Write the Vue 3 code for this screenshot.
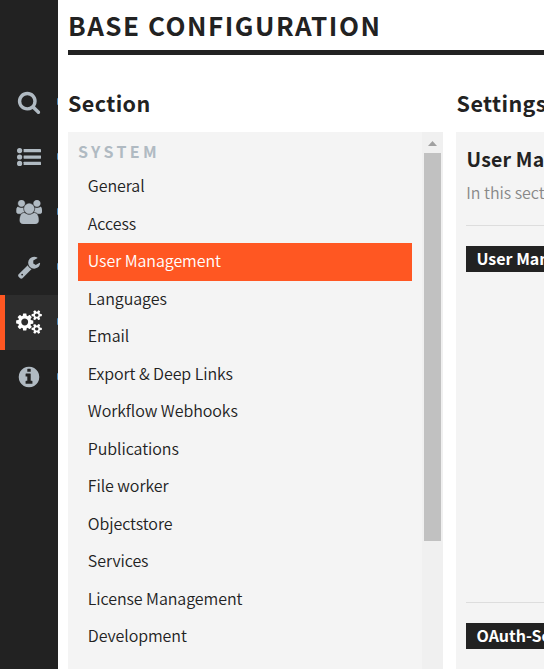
<script setup>
const nav = ['search', 'list', 'users', 'wrench', 'cogs', 'info']
const active = 'cogs'
const items = ['General', 'Access', 'User Management', 'Languages', 'Email', 'Export & Deep Links', 'Workflow Webhooks', 'Publications', 'File worker', 'Objectstore', 'Services', 'License Management', 'Development']
const selected = 'User Management'
const paths = {
  search: 'M1216 832q0-185-131.5-316.5t-316.5-131.5-316.5 131.5-131.5 316.5 131.5 316.5 316.5 131.5 316.5-131.5 131.5-316.5zm512 832q0 52-38 90t-90 38q-54 0-90-38l-343-342q-179 124-399 124-143 0-273.5-55.5t-225-150-150-225-55.5-273.5 55.5-273.5 150-225 225-150 273.5-55.5 273.5 55.5 225 150 150 225 55.5 273.5q0 220-124 399l343 343q37 37 37 90z',
  users: 'M593 896q-162 5-265 128h-134q-82 0-138-40.5t-56-118.5q0-353 124-353 6 0 43.5 21t97.5 42.5 119 21.5q67 0 133-23-5 37-5 66 0 139 81 256zm1071 637q0 120-73 189.5t-194 69.500h-874q-121 0-194-69.500t-73-189.500q0-53 3.500-103.500t14-109 26.500-108.500 43-97.500 62-81 85.500-53.500 111.500-20q10 0 43 21.500t73 48 107 48 135 21.500 135-21.500 107-48 73-48 43-21.500q61 0 111.500 20t85.500 53.500 62 81 43 97.500 26.500 108.500 14 109 3.500 103.500zm-1024-1277q0 106-75 181t-181 75-181-75-75-181 75-181 181-75 181 75 75 181zm704 384q0 159-112.500 271.500t-271.500 112.500-271.500-112.500-112.500-271.500 112.500-271.500 271.500-112.500 271.500 112.500 112.500 271.500zm576 225q0 78-56 118.500t-138 40.500h-134q-103-123-265-128 81-117 81-256 0-29-5-66 66 23 133 23 59 0 119-21.500t97.500-42.500 43.500-21q124 0 124 353zm-128-609q0 106-75 181t-181 75-181-75-75-181 75-181 181-75 181 75 75 181z',
  wrench: 'M448 1472q0-26-19-45t-45-19-45 19-19 45 19 45 45 19 45-19 19-45zm644-420l-682 682q-37 37-90 37-52 0-91-37l-106-108q-38-36-38-90 0-53 38-91l681-681q39 98 114.5 173.5t173.5 114.5zm634-435q0 39-23 106-47 134-164.5 217.5t-258.5 83.5q-185 0-316.5-131.5t-131.5-316.5 131.5-316.5 316.5-131.5q58 0 121.5 16.5t107.5 46.5q16 11 16 28t-16 28l-293 169v224l193 107q5-3 79-48.5t135.5-81 70.5-35.5q15 0 23.5 10t8.5 25z',
  info: 'M1152 1376v-160q0-14-9-23t-23-9h-96v-512q0-14-9-23t-23-9h-320q-14 0-23 9t-9 23v160q0 14 9 23t23 9h96v320h-96q-14 0-23 9t-9 23v160q0 14 9 23t23 9h448q14 0 23-9t9-23zm-128-896v-160q0-14-9-23t-23-9h-192q-14 0-23 9t-9 23v160q0 14 9 23t23 9h192q14 0 23-9t9-23zm640 416q0 209-103 385.5t-279.5 279.5-385.5 103-385.5-103-279.5-279.5-103-385.5 103-385.5 279.5-279.5 385.5-103 385.5 103 279.5 279.5 103 385.5z',
  cogs: 'M832 896q0-106-75-181t-181-75-181 75-75 181 75 181 181 75 181-75 75-181zm768 512q0-52-38-90t-90-38-90 38-38 90q0 53 37.5 90.5t90.5 37.5 90.5-37.5 37.5-90.5zm0-1024q0-52-38-90t-90-38-90 38-38 90q0 53 37.5 90.5t90.5 37.5 90.5-37.5 37.5-90.5zm-384 421v185q0 10-7 19.5t-16 10.5l-155 24q-11 35-32 76 34 48 90 115 7 11 7 20 0 12-7 19-23 30-82.5 89.5t-78.5 59.5q-11 0-21-7l-115-90q-37 19-77 31-11 108-23 155-7 24-30 24h-186q-11 0-20-7.5t-10-17.5l-23-153q-34-10-75-31l-118 89q-7 7-20 7-11 0-21-8-144-133-144-160 0-9 7-19 10-14 41-53t47-61q-23-44-35-82l-152-24q-10-1-17-9.5t-7-19.5v-185q0-10 7-19.5t16-10.5l155-24q11-35 32-76-34-48-90-115-7-11-7-20 0-12 7-20 22-30 82-89t79-59q11 0 21 7l115 90q34-18 77-32 11-108 23-154 7-24 30-24h186q11 0 20 7.5t10 17.5l23 153q34 10 75 31l118-89q8-7 20-7 11 0 21 8 144 133 144 160 0 8-7 19-12 16-42 54t-45 60q23 48 34 82l152 23q10 2 17 10.5t7 19.5zm640 533v140q0 16-149 31-12 27-30 52 51 113 51 138 0 4-4 7-122 71-124 71-8 0-46-47t-52-68q-20 2-30 2t-30-2q-14 21-52 68t-46 47q-2 0-124-71-4-3-4-7 0-25 51-138-18-25-30-52-149-15-149-31v-140q0-16 149-31 13-29 30-52-51-113-51-138 0-4 4-7 4-2 35-20t59-34 30-16q8 0 46 46.5t52 67.5q20-2 30-2t30 2q51-71 92-112l6-2q4 0 124 70 4 3 4 7 0 25-51 138 17 23 30 52 149 15 149 31zm0-1024v140q0 16-149 31-12 27-30 52 51 113 51 138 0 4-4 7-122 71-124 71-8 0-46-47t-52-68q-20 2-30 2t-30-2q-14 21-52 68t-46 47q-2 0-124-71-4-3-4-7 0-25 51-138-18-25-30-52-149-15-149-31v-140q0-16 149-31 13-29 30-52-51-113-51-138 0-4 4-7 4-2 35-20t59-34 30-16q8 0 46 46.5t52 67.5q20-2 30-2t30 2q51-71 92-112l6-2q4 0 124 70 4 3 4 7 0 25-51 138 17 23 30 52 149 15 149 31z',
}
const boxes = {
  search: '-64 0 1920 1792',
  users: '-16 0 1920 1792',
  wrench: '-64 0 1920 1792',
  info: '-64 0 1920 1792',
  cogs: '-64 0 1920 1792',
}
</script>

<template>
  <div class="app">
    <nav class="rail">
      <a v-for="n in nav" :key="n" class="rail-item" :class="{ active: n === active }">
        <svg v-if="n === 'list'" class="icon" viewBox="0 0 26 24">
          <circle cx="3.6" cy="5.6" r="2.6" /><circle cx="3.6" cy="12" r="2.6" /><circle cx="3.6" cy="18.4" r="2.6" />
          <rect x="7.6" y="4" width="17.4" height="3.3" rx=".4" />
          <rect x="7.6" y="10.4" width="17.4" height="3.3" rx=".4" />
          <rect x="7.6" y="16.8" width="17.4" height="3.3" rx=".4" />
        </svg>
        <svg v-else class="icon" :class="n" :viewBox="boxes[n]"><path :d="paths[n]" /></svg>
        <span class="bump"></span>
      </a>
    </nav>
    <main class="main">
      <h1 class="title">BASE CONFIGURATION</h1>
      <div class="columns">
        <section class="section-col">
          <h2 class="heading">Section</h2>
          <div class="list-box">
            <div class="list">
              <div class="group">SYSTEM</div>
              <div v-for="i in items" :key="i" class="item" :class="{ selected: i === selected }">{{ i }}</div>
            </div>
            <div class="scrollbar">
              <svg class="arrow" viewBox="0 0 9 5"><path d="M0 5 4.500 0 9 5z" /></svg>
              <div class="thumb"></div>
            </div>
          </div>
        </section>
        <section class="settings-col">
          <h2 class="heading">Settings</h2>
          <div class="panel">
            <h3 class="panel-title">User Management</h3>
            <p class="desc">In this section</p>
            <div class="block"><div class="label">User Management</div></div>
            <div class="block"><div class="label">OAuth-Service</div></div>
          </div>
        </section>
      </div>
    </main>
  </div>
</template>

<style>
body { margin: 0; overflow: hidden; background: #fff; }
</style>
<style scoped>
* { box-sizing: border-box; }
h1, h2, h3, p { margin: 0; }
.app { display: flex; width: 544px; height: 669px; overflow: hidden; color: #222; font-family: "Noto Sans CJK SC", "Noto Sans", sans-serif; white-space: nowrap; }
.rail { flex: 0 0 58px; background: #222; padding-top: 75px; }
.rail-item { position: relative; display: flex; align-items: center; height: 55px; padding: 0 0 2px 16px; border-left: 0 solid #ff5722; overflow: hidden; }
.rail-item.active { background: #2d2d2d; border-left-width: 5px; padding-left: 11px; }
.icon { width: 26px; height: 24px; fill: #b0bac2; }
.icon.users { stroke: #b0bac2; stroke-width: 24; }
.active .icon { fill: #fff; }
.bump { position: absolute; right: 0; top: 23px; width: 1px; height: 7px; border-radius: 1px 0 0 1px; background: #4a86b8; }
.main { flex: 1; min-width: 0; padding-left: 10px; overflow: hidden; }
.title { height: 55px; border-bottom: 5px solid #222; font-size: 26px; line-height: 49px; font-weight: 700; letter-spacing: 1.5px; }
.columns { display: flex; gap: 13px; padding-top: 34px; width: 900px; }
.section-col { width: 375px; }
.settings-col { width: 500px; }
.settings-col .heading { padding-left: .6px; }
.heading { height: 43px; font-size: 21.500px; line-height: 27px; font-weight: 700; letter-spacing: .4px; }
.list-box { display: flex; height: 537px; background: #f4f4f4; overflow: hidden; }
.list { flex: 1; padding: 0 10px; }
.group { height: 36px; line-height: 38px; font-size: 16px; font-weight: 700; letter-spacing: 3.4px; color: #b0bac2; }
.item { height: 37.500px; line-height: 34px; padding-left: 9.800px; font-size: 16px; font-weight: 350; letter-spacing: -.07px; }
.item.selected { background: #ff5722; color: #fff; }
.scrollbar { width: 21px; background: #f0f0f0; display: flex; flex-direction: column; align-items: center; padding-top: 9px; }
.arrow { width: 9px; height: 5px; fill: #a0a0a0; }
.thumb { width: 17px; height: 388px; margin-top: 7px; background: #c1c1c1; }
.panel { height: 537px; background: #f4f4f4; padding: 13px 10px 0; }
.panel-title { padding-left: .5px; font-size: 19.500px; line-height: 28px; height: 29px; font-weight: 700; letter-spacing: .2px; }
.desc { height: 51px; padding-left: .3px; font-size: 16px; line-height: 36px; font-weight: 350; color: #888; letter-spacing: -.03px; }
.block { height: 377px; border-top: 1px solid #ddd; padding-top: 20px; }
.label { height: 26px; padding-left: 10.500px; background: #222; color: #fff; font-size: 16px; line-height: 25px; font-weight: 700; }
</style>
